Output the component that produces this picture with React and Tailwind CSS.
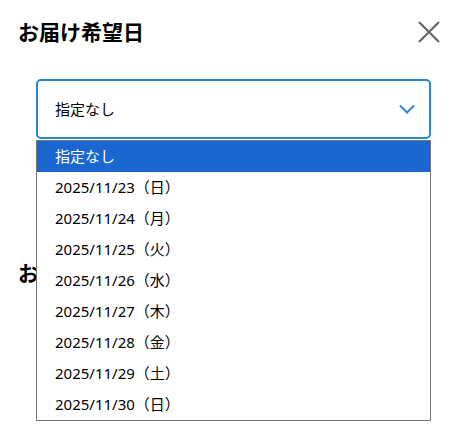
const OPTIONS = [
  "指定なし",
  "2025/11/23（日）",
  "2025/11/24（月）",
  "2025/11/25（火）",
  "2025/11/26（水）",
  "2025/11/27（木）",
  "2025/11/28（金）",
  "2025/11/29（土）",
  "2025/11/30（日）",
];

export default function App() {
  return (
    <div
      className="relative w-[450px] h-[435px] bg-white text-black overflow-hidden"
      style={{ fontFamily: '"Noto Sans", "Noto Sans CJK JP", sans-serif' }}
    >
      {/* Header */}
      <div className="flex items-center justify-between pl-[18px] pr-[10px] pt-[18px]">
        <h2 className="text-[21px] leading-[28px] font-bold">お届け希望日</h2>
        <button className="w-[22px] h-[22px] text-[#666]" aria-label="閉じる">
          <svg width="22" height="22" viewBox="0 0 22 22" fill="none" stroke="currentColor" strokeWidth="2.2">
            <path d="M1 1 L21 21 M21 1 L1 21" />
          </svg>
        </button>
      </div>

      {/* Select */}
      <div className="relative ml-[36px] mr-[19px] mt-[33px]">
        <div className="h-[60px] flex items-center justify-between border-2 border-[#2289d0] rounded-[5px] pl-[17px] pr-[14px]">
          <span className="text-[15px]">指定なし</span>
          <svg width="16" height="10" viewBox="0 0 16 10" fill="none" stroke="#2a8ad2" strokeWidth="2">
            <path d="M1 1.5 L8 8.5 L15 1.5" />
          </svg>
        </div>

        {/* Dropdown list */}
        <ul className="absolute left-0 right-0 top-[61px] z-10 bg-white border border-[#767676]">
          {OPTIONS.map((o, i) => (
            <li
              key={o}
              className={`h-[31px] flex items-center pl-[18px] text-[15px] ${
                i === 0 ? "bg-[#1a67d2] text-white" : "text-black"
              }`}
            >
              {o}
            </li>
          ))}
        </ul>
      </div>

      {/* Next section (behind list) */}
      <h2 className="pl-[18px] mt-[120px] text-[21px] leading-[28px] font-bold">お届け時間帯</h2>
    </div>
  );
}
